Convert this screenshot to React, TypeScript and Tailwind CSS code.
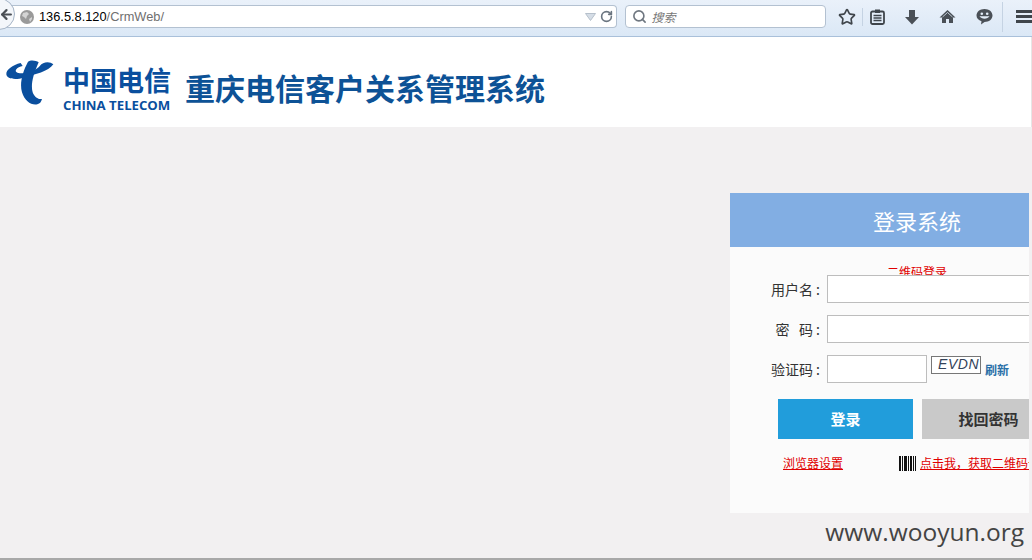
import React from "react";
import { ArrowLeft, RotateCw, Search, Star } from "lucide-react";

const cjk = "font-['Noto_Sans_CJK_SC',sans-serif]";

const LogoMark = () => (
  <svg width="48" height="45" viewBox="18 15 144 135" className="shrink-0">
    <path
      d="M62 24C38 30 18 44 19 58C20 72 45 76 72 68C105 58 145 50 160 28C150 18 128 20 120 32C110 44 90 52 72 54C55 56 44 52 48 44C52 38 60 34 68 33Z"
      fill="#0a4f9e"
    />
    <path
      d="M84 20C68 50 58 85 66 112C74 138 94 152 112 148C120 146 124 140 126 132C116 134 104 128 98 112C92 92 98 62 116 22C108 16 92 14 84 20Z"
      fill="#0a4f9e"
    />
  </svg>
);

const Toolbar = () => (
  <div className="relative flex h-[37px] shrink-0 items-start border-b border-[#a9c0da] bg-gradient-to-b from-[#eaf1fa] to-[#dbe8f6] pt-[5px]">
    <div className="absolute left-[-17px] top-[-2px] z-10 flex h-8 w-8 items-center justify-end rounded-full border border-[#a5b4c6] bg-[#f3f6fa]">
      <ArrowLeft size={15} strokeWidth={3.5} className="text-[#4a4f55]" />
    </div>
    <div className="flex h-[23px] w-[618px] items-center rounded-r-sm border border-l-0 border-[#b3c1d1] bg-white pl-5 pr-[3px]">
      <svg width="14" height="14" viewBox="0 0 14 14" className="shrink-0">
        <circle cx="7" cy="7" r="7" fill="#9a9a9a" />
        <path d="M3 3l4-1 2 2-2 2-1 3-2-2-2-1zM9 9l3-2 0 2-2 3z" fill="#d4d4d4" />
      </svg>
      <span className="ml-[5px] font-['Liberation_Sans',sans-serif] text-[12.8px] text-black">
        136.5.8.120<span className="text-[#6f6f6f]">/CrmWeb/</span>
      </span>
      <svg width="11" height="8" viewBox="0 0 11 8" className="ml-auto mr-1">
        <path d="M0.5 0.5h10L5.5 7.5z" fill="#d5dde6" stroke="#b6c0cb" />
      </svg>
      <RotateCw size={13} strokeWidth={3} className="text-[#6b7580]" />
    </div>
    <div className="ml-2 flex h-[23px] w-[202px] items-center rounded-sm border border-[#b3c1d1] bg-white pl-[6px]">
      <Search size={15} strokeWidth={2.6} className="text-[#6f7780]" />
      <span className={`ml-[5px] text-[12px] italic text-[#777] ${cjk}`}>搜索</span>
    </div>
    <div className="ml-[12px] flex h-[23px] items-center">
      <Star size={18} strokeWidth={2.2} className="text-[#3f454b]" />
      <div className="ml-[6px] h-[18px] w-px bg-[#c5d3e3]" />
      <svg width="15" height="16" viewBox="0 0 15 16" className="ml-[7px]">
        <rect x="1" y="2.5" width="13" height="12.5" rx="1.5" fill="none" stroke="#3f454b" strokeWidth="1.8" />
        <rect x="5" y="0.5" width="5" height="3.5" fill="#3f454b" />
        <path d="M3.5 6.5h8M3.5 9h8M3.5 11.5h8" stroke="#3f454b" strokeWidth="1.3" />
      </svg>
      <svg width="16" height="16" viewBox="0 0 16 16" className="ml-[19px]">
        <path d="M5 1h6v7h4l-7 7.500-7-7.500h4z" fill="#4a5057" />
      </svg>
      <svg width="17" height="15" viewBox="0 0 17 15" className="ml-[19px]">
        <path d="M8.500 1L0.500 8.500h2.500v5.500h4v-4h3v4h4v-5.500h2.500z" fill="#4a5057" />
        <path d="M8.500 3.500L3.500 8M8.500 3.500L13.500 8" stroke="#dce8f5" strokeWidth="0.8" />
      </svg>
      <svg width="17" height="17" viewBox="0 0 17 17" className="ml-[20px]">
        <path d="M8.500 1C13 1 16.500 3.800 16.500 7.500S13 14 8.500 14L5 16.500 5.500 13.300C2.500 12.300 0.500 10.200 0.500 7.500 0.500 3.800 4 1 8.500 1Z" fill="#4a5057" />
        <circle cx="5.800" cy="5.800" r="1.300" fill="#e3edf8" />
        <circle cx="11.200" cy="5.800" r="1.300" fill="#e3edf8" />
        <path d="M3.500 8.200C5.500 11.500 11.500 11.500 13.500 8.200Z" fill="#e3edf8" />
      </svg>
      <div className="ml-[9px] h-[30px] w-px bg-[#c5d3e3]" />
      <div className="ml-[13px] flex w-[16px] flex-col gap-[2px]">
        <div className="h-[3px] bg-[#3f454b]" />
        <div className="h-[3px] bg-[#3f454b]" />
        <div className="h-[3px] bg-[#3f454b]" />
      </div>
    </div>
  </div>
);

const Header = () => (
  <div className="flex h-[90px] shrink-0 items-center border-r border-[#e6e6e6] bg-white pl-[6px] text-[#0d5296]">
    <LogoMark />
    <div className="ml-[9px] flex w-[108px] flex-col pt-[14px]">
      <span className={`h-[27px] text-[27px] font-bold leading-[27px] text-[#0a4f9e] ${cjk}`}>中国电信</span>
      <span className="mt-[6px] whitespace-nowrap font-['Open_Sans',sans-serif] text-[13.2px] font-bold leading-[13px] text-[#0a4f9e]">
        CHINA TELECOM
      </span>
    </div>
    <h1 className={`ml-[14px] whitespace-nowrap pt-[10px] text-[30px] font-bold leading-none ${cjk}`}>
      重庆电信客户关系管理系统
    </h1>
  </div>
);

const Row = ({ label, short }: { label: string; short?: boolean }) => (
  <div className="flex h-7 items-center">
    <label className={`w-[90px] whitespace-pre text-right text-[14px] text-[#333] ${cjk}`}>{label}</label>
    <div className={`ml-[7px] h-7 shrink-0 border border-[#bdbdbd] bg-white ${short ? "w-[100px]" : "w-[260px]"}`} />
    {short && (
      <>
        <div className="mb-[9px] ml-1 flex h-[18px] w-[50px] shrink-0 items-center justify-end overflow-hidden border border-[#777] bg-white pr-px font-['Liberation_Sans',sans-serif] text-[14px] italic tracking-[0.5px] text-[#33435a]">
          EVDN
        </div>
        <a className={`ml-1 mt-[2px] text-[12px] font-bold text-[#2a70a8] ${cjk}`}>刷新</a>
      </>
    )}
  </div>
);

const Barcode = () => (
  <svg width="17" height="15" viewBox="0 0 17 15" className="shrink-0">
    <path d="M0 0h2v15H0zM3 0h1v15H3zM5 0h3v15H5zM9 0h1v15H9zM11 0h2v15h-2zM14 0h1v15h-1zM16 0h1v15h-1z" fill="#111" />
  </svg>
);

const LoginPanel = () => (
  <div className="ml-[730px] mt-[66px] h-[320px] w-[299px] overflow-hidden bg-[#fbfbfb]">
    <div className="w-[374px]">
      <div className={`flex h-[54px] items-center justify-center bg-[#82aee3] text-[22px] text-white ${cjk}`}>登录系统</div>
      <div className={`mt-[17px] h-[11px] overflow-hidden text-center text-[12px] leading-[16px] text-[#e00000] ${cjk}`}>二维码登录</div>
      <div className="flex flex-col gap-3">
        <Row label="用户名 :" />
        <Row label="密   码 :" />
        <Row label="验证码 :" short />
      </div>
      <div className={`ml-12 mt-4 flex gap-[9px] text-[15px] font-bold ${cjk}`}>
        <button className="h-10 w-[135px] bg-[#219ddb] text-white">登录</button>
        <button className="h-10 w-[133px] bg-[#c9c9c9] text-[#333]">找回密码</button>
      </div>
      <div className={`ml-[53px] mt-[15px] flex items-center whitespace-nowrap text-[12px] text-[#e00000] underline ${cjk}`}>
        <a>浏览器设置</a>
        <span className="ml-14 mr-1 flex"><Barcode /></span>
        <a>点击我，获取二维码卡</a>
      </div>
    </div>
  </div>
);

export default function App() {
  return (
    <div className="relative flex h-[560px] w-[1032px] flex-col overflow-hidden border-b-2 border-[#a8a8a8] bg-[#f2f0f1]">
      <Toolbar />
      <Header />
      <LoginPanel />
      <span className="absolute bottom-[14px] right-[8px] font-['Open_Sans',sans-serif] text-[24.5px] leading-none text-[#444]">
        www.wooyun.org
      </span>
    </div>
  );
}
